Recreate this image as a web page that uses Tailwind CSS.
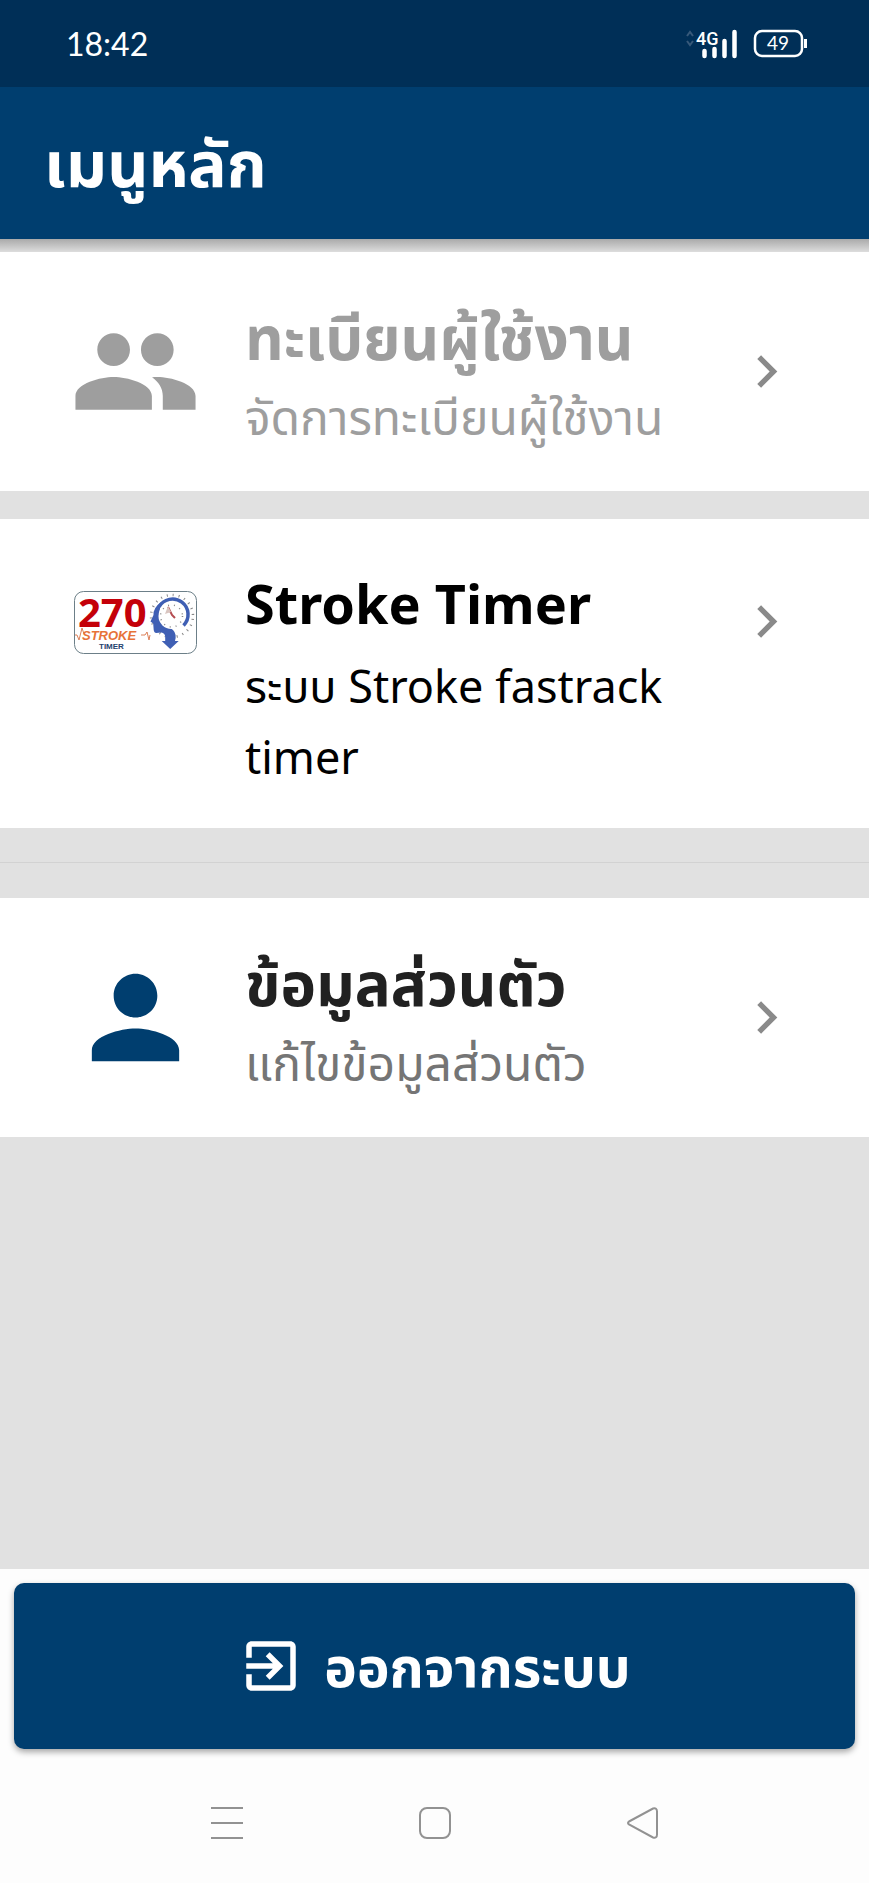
<!DOCTYPE html>
<html lang="th">
<head>
<meta charset="utf-8">
<meta name="viewport" content="width=device-width, initial-scale=1">
<title>เมนูหลัก</title>
<script src="https://cdn.jsdelivr.net/npm/@tailwindcss/browser@4"></script>
</head>
<body class="min-h-screen flex flex-col bg-[#e1e1e1] font-['Noto_Sans','Noto_Sans_Thai',sans-serif]">
  <div class="h-[87px] bg-[#002f57] text-white flex items-center justify-between pl-[66px] pr-[62px] font-[Lato,sans-serif]">
    <time class="text-[32px] leading-10">18:42</time>
    <div class="flex items-center gap-4">
      <svg class="w-[51px] h-[30px] overflow-visible" viewBox="0 0 51 30" fill="none" role="img" aria-label="4G">
        <path d="M1 7l3-4 3 4M1 12l3 4 3-4" stroke="#37597a" stroke-width="2"/>
        <text x="10" y="16" font-family="Roboto, sans-serif" font-size="18" font-weight="500" fill="#fff">4G</text>
        <path d="M18.500 22v5M28.500 20v7M38.500 12v15M48.500 3v24" stroke="#fff" stroke-width="4.500" stroke-linecap="round"/>
      </svg>
      <svg class="w-[54px] h-[30px]" viewBox="0 0 54 30" fill="none" role="img" aria-label="49%">
        <rect x="2" y="2" width="47" height="25" rx="7" stroke="#fff" stroke-width="2.500"/>
        <path d="M52.500 10v9" stroke="#fff" stroke-width="3"/>
        <text x="25" y="21" font-size="19" text-anchor="middle" fill="#fff">49</text>
      </svg>
    </div>
  </div>
  <header class="h-[152px] bg-[#003e6f] flex items-center px-11">
    <h1 class="text-white font-bold text-[64px] leading-[80px]">เมนูหลัก</h1>
  </header>
  <div class="h-[13px] bg-linear-to-b from-[#aaaaaa] to-[#dddddd]"></div>

  <main class="flex-1">
    <a href="#users" class="flex items-center gap-11 bg-white px-[70px] h-[239px] text-[#9e9e9e]">
      <svg class="size-[131px] shrink-0" viewBox="0 0 24 24" fill="currentColor" aria-hidden="true"><path d="M16 11c1.660 0 2.990-1.340 2.990-3S17.660 5 16 5s-3 1.340-3 3 1.340 3 3 3zm-8 0c1.660 0 2.990-1.340 2.990-3S9.660 5 8 5 5 6.340 5 8s1.340 3 3 3zm0 2c-2.330 0-7 1.170-7 3.500V19h14v-2.500c0-2.330-4.670-3.500-7-3.500zm8 0c-.290 0-.620.020-.970.050 1.160.840 1.970 1.970 1.970 3.450V19h6v-2.500c0-2.330-4.670-3.500-7-3.500z"/></svg>
      <div class="flex-1 pt-1.5">
        <h2 class="font-bold text-[60px] leading-[80px]">ทะเบียนผู้ใช้งาน</h2>
        <p class="mt-1 text-[48px] leading-[71px]">จัดการทะเบียนผู้ใช้งาน</p>
      </div>
      <svg class="size-[65px] shrink-0 text-[#8a8a8a]" viewBox="0 0 24 24" fill="currentColor" aria-hidden="true"><path d="M10 6L8.590 7.410 13.170 12l-4.580 4.590L10 18l6-6z"/></svg>
    </a>

    <a href="#stroke" class="flex items-start gap-11 bg-white px-[70px] pt-[37px] pb-9 mt-7 text-black">
      <svg class="size-[131px] shrink-0" viewBox="0 0 131 131" role="img" aria-label="270 Stroke Timer">
        <rect x="4.500" y="35.500" width="122" height="62" rx="9" fill="#fff" stroke="#6c7f88"/>
        <text x="8" y="71" font-family="Open Sans, sans-serif" font-size="40" font-weight="700" fill="#c40009">270</text>
        <path d="M5 79h2l2 5 3-12 2 6M71 79h4l2-3 2 8 1-5" fill="none" stroke="#dc8058"/>
        <text x="12" y="84" font-family="Liberation Sans, sans-serif" font-size="13" font-weight="700" font-style="italic" fill="#e77338">STROKE</text>
        <text x="29" y="93" font-family="Liberation Sans, sans-serif" font-size="8" font-weight="700" fill="#24436f">TIMER</text>
        <circle cx="102" cy="60" r="21" fill="none" stroke="#888" stroke-width="2.500" stroke-dasharray="1 5" stroke-dashoffset="3"/>
        <path d="M91 46q-8 6-7.500 13l-3 6.500 2.700 2 .500 6.500q.500 3 2.500 3l5-.500q4 .500 4 4.500v4h-3.500l8.500 8 8.500-8H105q2-7-2-11-3-3-8-5-7-4-6-10z" fill="#3f5fb4"/>
        <path d="M89 51A15.500 15.500 0 1 1 113.500 69.500" fill="none" stroke="#3f5fb4" stroke-width="3.500"/>
        <circle cx="101.500" cy="60" r="13" fill="#fff"/>
        <circle cx="101.500" cy="60" r="11" fill="none" stroke="#888" stroke-width="1.500" stroke-dasharray="1 5"/>
        <path d="M98 51l4 8 3 3" fill="none" stroke="#b44b50" stroke-width="2"/>
        <path d="M95 58l3-8 3 6z" fill="#d9c5c0"/>
      </svg>
      <div class="flex-1">
        <h2 class="font-bold text-[54px] leading-[94px]">Stroke Timer</h2>
        <p class="text-[45px] leading-[71px]">ระบบ Stroke fastrack timer</p>
      </div>
      <svg class="size-[65px] shrink-0 text-[#8a8a8a] mt-[33px]" viewBox="0 0 24 24" fill="currentColor" aria-hidden="true"><path d="M10 6L8.590 7.410 13.170 12l-4.580 4.590L10 18l6-6z"/></svg>
    </a>

    <hr class="border-t border-[#d2d2d2] mt-[34px] mb-[35px]">

    <a href="#profile" class="flex items-center gap-11 bg-white px-[70px] h-[239px] text-[#212121]">
      <svg class="size-[131px] shrink-0 text-[#003e6f]" viewBox="0 0 24 24" fill="currentColor" aria-hidden="true"><path d="M12 12c2.210 0 4-1.790 4-4s-1.790-4-4-4-4 1.790-4 4 1.790 4 4 4zm0 2c-2.670 0-8 1.340-8 4v2h16v-2c0-2.660-5.330-4-8-4z"/></svg>
      <div class="flex-1 pt-1.5">
        <h2 class="font-bold text-[60px] leading-[80px]">ข้อมูลส่วนตัว</h2>
        <p class="mt-1 text-[48px] leading-[71px] text-[#757575]">แก้ไขข้อมูลส่วนตัว</p>
      </div>
      <svg class="size-[65px] shrink-0 text-[#8a8a8a]" viewBox="0 0 24 24" fill="currentColor" aria-hidden="true"><path d="M10 6L8.590 7.410 13.170 12l-4.580 4.590L10 18l6-6z"/></svg>
    </a>
  </main>

  <footer class="bg-[#fdfdfd]">
    <div class="px-3.5 pt-3.5">
      <button type="button" class="w-full h-[166px] rounded-[10px] bg-[#003e6f] text-white shadow-[0_3px_6px_rgba(0,0,0,0.35)] flex items-center justify-center gap-5">
        <svg class="size-[66px] shrink-0" viewBox="0 0 24 24" fill="currentColor" aria-hidden="true"><path d="M10.090 15.590L11.500 17l5-5-5-5-1.410 1.410L12.670 11H3v2h9.670l-2.580 2.590zM19 3H5c-1.110 0-2 .900-2 2v4h2V5h14v14H5v-4H3v4c0 1.100.890 2 2 2h14c1.100 0 2-.900 2-2V5c0-1.100-.900-2-2-2z"/></svg>
        <span class="font-bold text-[55px] leading-[72px]">ออกจากระบบ</span>
      </button>
    </div>
    <nav class="h-[134px] pt-[14px] flex items-center justify-center gap-[176px] text-[#929292]" aria-label="ระบบ">
      <button type="button" aria-label="แอปล่าสุด"><svg class="size-8" viewBox="0 0 32 32" fill="none" stroke="currentColor" stroke-width="2"><path d="M0 1h32M0 16h32M0 31h32"/></svg></button>
      <button type="button" aria-label="หน้าแรก"><svg class="size-8" viewBox="0 0 32 32" fill="none" stroke="currentColor" stroke-width="2"><rect x="1" y="1" width="30" height="30" rx="7"/></svg></button>
      <button type="button" aria-label="ย้อนกลับ"><svg class="size-8" viewBox="0 0 32 32" fill="none" stroke="currentColor" stroke-width="2"><path d="M2 14.500L26 1.500q4-1 4 3v23q0 4-4 3L2 17.500q-2-1.500 0-3z"/></svg></button>
    </nav>
  </footer>
</body>
</html>
